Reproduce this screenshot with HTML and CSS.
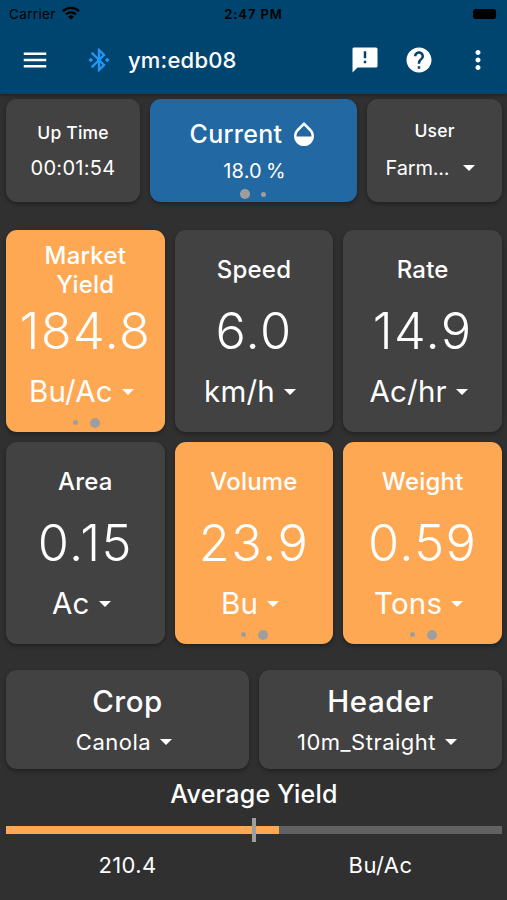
FILE: index.html
```html
<!DOCTYPE html>
<html lang="en">
<head>
    <meta charset="UTF-8">
    <meta name="viewport" content="width=device-width, initial-scale=1.0">
    <title>Yield Monitor</title>
    <link rel="stylesheet" href="styles.css">
</head>
<body>
    <header>
        <div class="status-bar">
            <div class="carrier">
                <span>Carrier</span>
                <svg width="18" height="14" viewBox="0 0 18 14" fill="none" stroke="#000" stroke-width="2.4">
                    <path d="M1 5.2a11.4 11.4 0 0 1 16 0"/>
                    <path d="M4 8.4a7.2 7.2 0 0 1 10 0"/>
                    <path d="M9 13.4L6.2 10.7a4 4 0 0 1 5.6 0z" fill="#000" stroke="none"/>
                </svg>
            </div>
            <div class="clock">2:47 PM</div>
            <div class="battery">
                <svg width="28" height="12" viewBox="0 0 28 12">
                    <rect x="1" y="1" width="23" height="10" rx="2.5"/>
                    <path d="M25.5 4.2q1.6 1.8 0 3.6z" opacity=".5"/>
                </svg>
            </div>
        </div>
        <nav class="app-bar">
            <svg class="menu" width="30" height="30" viewBox="0 0 24 24"><path d="M3 18h18v-2H3v2zm0-5h18v-2H3v2zm0-7v2h18V6H3z"/></svg>
            <svg class="bluetooth" width="28" height="28" viewBox="0 0 24 24"><path d="M7 12l-2-2-2 2 2 2 2-2zm10.71-4.29L12 2h-1v7.59L6.41 5 5 6.41 10.59 12 5 17.59 6.41 19 11 14.41V22h1l5.71-5.71-4.3-4.29 4.3-4.29zM13 5.83l1.88 1.88L13 9.59V5.83zm1.88 10.46L13 18.17v-3.76l1.88 1.88zM19 10l-2 2 2 2 2-2-2-2z"/></svg>
            <h1>ym:edb08</h1>
            <svg class="feedback" width="30" height="30" viewBox="0 0 24 24"><path d="M20.8 2H3.2A1.1 1.1 0 0 0 2.01 3.2L2 22l4-4h14.8a1.2 1.2 0 0 0 1.2-1.2V3.2A1.2 1.2 0 0 0 20.8 2zM13 14.5h-2v-2h2v2zm0-4h-2V5h2v5.5z"/></svg>
            <svg class="help" width="30" height="30" viewBox="0 0 24 24"><path d="M12 2C6.48 2 2 6.48 2 12s4.48 10 10 10 10-4.48 10-10S17.52 2 12 2zm1 17h-2v-2h2v2zm2.07-7.75l-.9.92C13.45 12.9 13 13.5 13 15h-2v-.5c0-1.1.45-2.1 1.17-2.83l1.24-1.26c.37-.36.59-.86.59-1.41 0-1.1-.9-2-2-2s-2 .9-2 2H8c0-2.21 1.79-4 4-4s4 1.79 4 4c0 .88-.36 1.68-.93 2.25z"/></svg>
            <svg class="more" width="30" height="30" viewBox="0 0 24 24"><path d="M12 8c1.1 0 2-.9 2-2s-.9-2-2-2-2 .9-2 2 .9 2 2 2zm0 2c-1.1 0-2 .9-2 2s.9 2 2 2 2-.9 2-2-.9-2-2-2zm0 6c-1.1 0-2 .9-2 2s.9 2 2 2 2-.9 2-2-.9-2-2-2z"/></svg>
        </nav>
    </header>

    <main>
        <section class="top-row">
            <div class="card small">
                <h3>Up Time</h3>
                <p>00:01:54</p>
            </div>
            <div class="card blue moisture">
                <h2>Current
                    <svg width="30" height="30" viewBox="0 0 24 24"><path d="M17.66 8L12 2.35 6.34 8C4.78 9.56 4 11.64 4 13.64s.78 4.11 2.34 5.67 3.61 2.35 5.66 2.35 4.1-.79 5.66-2.35S20 15.64 20 13.64 19.22 9.56 17.66 8zM6 14c.01-2 .62-3.27 1.76-4.4L12 5.27l4.24 4.38C17.38 10.77 17.99 12 18 14H6z"/></svg>
                </h2>
                <p>18.0<span>%</span></p>
                <div class="dots"><i class="active"></i><i></i></div>
            </div>
            <div class="card small user">
                <h3>User</h3>
                <p>Farm...<span class="caret"></span></p>
            </div>
        </section>

        <section class="grid">
            <div class="card metric orange">
                <h3>Market Yield</h3>
                <div class="value">184.8</div>
                <div class="unit">Bu/Ac<span class="caret"></span></div>
                <div class="dots"><i></i><i class="active"></i></div>
            </div>
            <div class="card metric">
                <h3>Speed</h3>
                <div class="value">6.0</div>
                <div class="unit">km/h<span class="caret"></span></div>
            </div>
            <div class="card metric">
                <h3>Rate</h3>
                <div class="value">14.9</div>
                <div class="unit">Ac/hr<span class="caret"></span></div>
            </div>
            <div class="card metric">
                <h3>Area</h3>
                <div class="value">0.15</div>
                <div class="unit">Ac<span class="caret"></span></div>
            </div>
            <div class="card metric orange">
                <h3>Volume</h3>
                <div class="value">23.9</div>
                <div class="unit">Bu<span class="caret"></span></div>
                <div class="dots"><i></i><i class="active"></i></div>
            </div>
            <div class="card metric orange">
                <h3>Weight</h3>
                <div class="value">0.59</div>
                <div class="unit">Tons<span class="caret"></span></div>
                <div class="dots"><i></i><i class="active"></i></div>
            </div>
        </section>

        <section class="setup-row">
            <div class="card setup">
                <h2>Crop</h2>
                <p>Canola<span class="caret"></span></p>
            </div>
            <div class="card setup">
                <h2>Header</h2>
                <p>10m_Straight<span class="caret"></span></p>
            </div>
        </section>

        <section class="average">
            <h2>Average Yield</h2>
            <div class="bar">
                <div class="fill" style="width: 55%"></div>
                <div class="marker"></div>
            </div>
            <div class="average-values">
                <span>210.4</span>
                <span>Bu/Ac</span>
            </div>
        </section>
    </main>
</body>
</html>
```

FILE: styles.css
```css
* {
    margin: 0;
    padding: 0;
    box-sizing: border-box;
}

body {
    font-family: Inter, "Liberation Sans", sans-serif;
    background: #303030;
    color: #fff;
    height: 900px;
    overflow: hidden;
}

svg {
    display: block;
    flex: none;
    fill: #fff;
}

h1, h2, h3 {
    font-weight: 500;
}

/* Header */
header {
    height: 94px;
    background: #00456f;
    box-shadow: 0 1px 4px rgba(0, 0, 0, 0.4);
}

.status-bar {
    display: grid;
    grid-template-columns: 1fr auto 1fr;
    align-items: center;
    height: 27px;
    padding: 0 9px;
    color: #000;
    font-size: 13.5px;
}

.status-bar svg {
    fill: #000;
}

.carrier {
    display: flex;
    align-items: center;
    gap: 6px;
    letter-spacing: 0.35px;
}

.carrier svg {
    fill: none;
    margin-top: -2px;
}

.clock {
    font-weight: 600;
    font-size: 13px;
    letter-spacing: 0.9px;
}

.battery {
    display: flex;
    justify-content: flex-end;
    margin-right: -2px;
}

.app-bar {
    display: flex;
    align-items: center;
    height: 65px;
    padding: 0 14px 0 20px;
}

.bluetooth {
    margin-left: 35px;
    fill: #2196f3;
}

h1 {
    flex: 1;
    margin-left: 15px;
    font-size: 22px;
    letter-spacing: 0.2px;
}

.help {
    margin-left: 24px;
}

.more {
    margin-left: 29px;
}

/* Cards */
main {
    padding: 5px 5px 0 6px;
}

.card {
    position: relative;
    background: #424242;
    border-radius: 11px;
    box-shadow: 0 2px 4px rgba(0, 0, 0, 0.35);
    text-align: center;
}

.orange {
    background: #ffa853;
}

.blue {
    background: #2268a2;
}

.caret {
    display: inline-block;
    border-left: 6px solid transparent;
    border-right: 6px solid transparent;
    border-top: 6px solid #fff;
}

.dots {
    position: absolute;
    left: 0;
    right: 0;
    bottom: 3px;
    display: flex;
    justify-content: center;
    align-items: center;
    gap: 11px;
}

.dots i {
    width: 5px;
    height: 5px;
    border-radius: 50%;
    background: #9e9e9e;
}

.dots .active {
    width: 10px;
    height: 10px;
}

.top-row {
    display: grid;
    grid-template-columns: 134px 207px 135px;
    gap: 10px;
    height: 103px;
}

.small h3 {
    padding-top: 22px;
    font-size: 17.5px;
    line-height: 24px;
    letter-spacing: 0.2px;
}

.small p {
    margin-top: 9px;
    font-size: 20px;
    line-height: 28px;
    letter-spacing: 0.3px;
}

.user h3 {
    padding-top: 20px;
}

.user p {
    margin-top: 11px;
    letter-spacing: -0.2px;
}

.user .caret {
    margin-left: 14px;
    margin-right: 8px;
    vertical-align: 4px;
}

.moisture h2 {
    display: flex;
    justify-content: center;
    align-items: center;
    gap: 7px;
    padding-top: 19px;
    padding-left: 2px;
    font-size: 25px;
    line-height: 32px;
    letter-spacing: 0.3px;
}

.moisture p {
    margin-top: 7px;
    padding-left: 2px;
    font-size: 20px;
    line-height: 28px;
    letter-spacing: 0.2px;
}

.moisture p span {
    margin-left: 4px;
}

.moisture .dots {
    margin-right: 2px;
}

.grid {
    display: grid;
    grid-template-columns: repeat(3, 1fr);
    gap: 10px;
    margin-top: 27.5px;
}

.metric {
    height: 202px;
    padding-top: 11px;
}

.metric .dots {
    bottom: 4px;
    padding-left: 2px;
    gap: 12px;
}

.metric h3 {
    display: flex;
    justify-content: center;
    align-items: center;
    height: 58px;
    padding: 0 30px;
    font-size: 24px;
    line-height: 29px;
    letter-spacing: 0.2px;
}

.value {
    font-size: 50.5px;
    font-weight: 300;
    line-height: 64px;
    letter-spacing: 1.4px;
}

.unit {
    font-size: 29.5px;
    line-height: 57px;
    letter-spacing: 0.2px;
}

.unit .caret {
    margin-left: 9px;
    margin-right: 8px;
    vertical-align: 7px;
}

.setup-row {
    display: grid;
    grid-template-columns: 1fr 1fr;
    gap: 10px;
    margin-top: 26px;
}

.setup {
    height: 99.5px;
    padding-top: 12px;
}

.setup h2 {
    font-size: 29.5px;
    line-height: 38px;
    letter-spacing: 0.5px;
}

.setup p {
    margin-top: 8px;
    font-size: 22px;
    line-height: 28px;
    letter-spacing: 0.5px;
}

.setup .caret {
    margin-left: 9px;
    margin-right: 7px;
    vertical-align: 5px;
}

/* Average yield */
.average h2 {
    margin-top: 9px;
    font-size: 25px;
    line-height: 32px;
    letter-spacing: 0.2px;
    text-align: center;
}

.bar {
    position: relative;
    height: 8px;
    margin-top: 15.5px;
    background: #616161;
}

.fill {
    height: 8px;
    background: #ffa853;
}

.marker {
    position: absolute;
    left: 50%;
    top: -8px;
    width: 4px;
    height: 24px;
    margin-left: -2px;
    background: #9e9e9e;
}

.average-values {
    display: grid;
    grid-template-columns: 1fr 1fr;
    gap: 10px;
    margin-top: 16.5px;
    font-size: 22px;
    line-height: 30px;
    letter-spacing: 0.4px;
    text-align: center;
}
```
